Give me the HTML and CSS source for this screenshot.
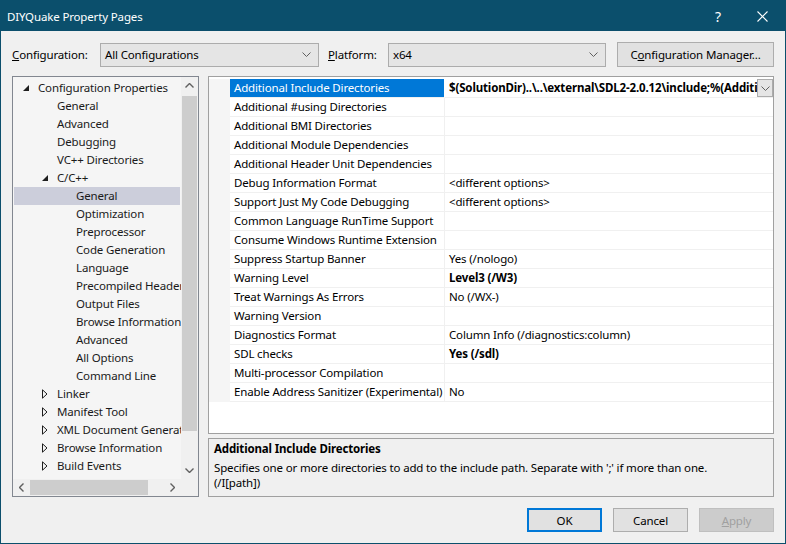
FILE: index.html
```html
<!DOCTYPE html>
<html>
<head>
<meta charset="utf-8">
<link rel="stylesheet" href="styles.css">
</head>
<body>
<div class="window">
  <div class="titlebar">
    <span class="title">DIYQuake Property Pages</span>
    <span class="tb-help">?</span>
    <svg class="tb-close" width="11" height="11" viewBox="0 0 11 11"><path d="M0.5 0.5 L10.5 10.5 M10.5 0.5 L0.5 10.5" stroke="#fff" stroke-width="1.1" fill="none"/></svg>
  </div>
  <div class="content">
    <div class="toprow">
      <span class="lbl lbl-config"><u>C</u>onfiguration:</span>
      <div class="combo combo-config"><span class="combo-text">All Configurations</span><svg class="chev" width="9" height="5" viewBox="0 0 9 5"><path d="M0.5 0.5 L4.5 4.5 L8.5 0.5" stroke="#606060" fill="none"/></svg></div>
      <span class="lbl lbl-platform"><u>P</u>latform:</span>
      <div class="combo combo-platform"><span class="combo-text">x64</span><svg class="chev" width="9" height="5" viewBox="0 0 9 5"><path d="M0.5 0.5 L4.5 4.5 L8.5 0.5" stroke="#606060" fill="none"/></svg></div>
      <button class="btn btn-cfgmgr">C<u>o</u>nfiguration Manager...</button>
    </div>
    <div class="main">
      <div class="tree">
        <div class="tree-view">
          <div class="trow l0"><span class="exp"><svg width="6" height="6" viewBox="0 0 6 6"><path d="M6 0 L6 6 L0 6 Z" fill="#1e1e1e"/></svg></span>Configuration Properties</div>
          <div class="trow l1"><span class="exp"></span>General</div>
          <div class="trow l1"><span class="exp"></span>Advanced</div>
          <div class="trow l1"><span class="exp"></span>Debugging</div>
          <div class="trow l1"><span class="exp"></span>VC++ Directories</div>
          <div class="trow l1"><span class="exp"><svg width="6" height="6" viewBox="0 0 6 6"><path d="M6 0 L6 6 L0 6 Z" fill="#1e1e1e"/></svg></span>C/C++</div>
          <div class="trow l2 sel"><span class="exp"></span>General</div>
          <div class="trow l2"><span class="exp"></span>Optimization</div>
          <div class="trow l2"><span class="exp"></span>Preprocessor</div>
          <div class="trow l2"><span class="exp"></span>Code Generation</div>
          <div class="trow l2"><span class="exp"></span>Language</div>
          <div class="trow l2"><span class="exp"></span>Precompiled Headers</div>
          <div class="trow l2"><span class="exp"></span>Output Files</div>
          <div class="trow l2"><span class="exp"></span>Browse Information</div>
          <div class="trow l2"><span class="exp"></span>Advanced</div>
          <div class="trow l2"><span class="exp"></span>All Options</div>
          <div class="trow l2"><span class="exp"></span>Command Line</div>
          <div class="trow l1"><span class="exp"><svg width="6" height="10" viewBox="0 0 6 10"><path d="M0.5 0.8 L5 5 L0.5 9.2 Z" stroke="#1e1e1e" fill="none"/></svg></span>Linker</div>
          <div class="trow l1"><span class="exp"><svg width="6" height="10" viewBox="0 0 6 10"><path d="M0.5 0.8 L5 5 L0.5 9.2 Z" stroke="#1e1e1e" fill="none"/></svg></span>Manifest Tool</div>
          <div class="trow l1"><span class="exp"><svg width="6" height="10" viewBox="0 0 6 10"><path d="M0.5 0.8 L5 5 L0.5 9.2 Z" stroke="#1e1e1e" fill="none"/></svg></span>XML Document Generator</div>
          <div class="trow l1"><span class="exp"><svg width="6" height="10" viewBox="0 0 6 10"><path d="M0.5 0.8 L5 5 L0.5 9.2 Z" stroke="#1e1e1e" fill="none"/></svg></span>Browse Information</div>
          <div class="trow l1"><span class="exp"><svg width="6" height="10" viewBox="0 0 6 10"><path d="M0.5 0.8 L5 5 L0.5 9.2 Z" stroke="#1e1e1e" fill="none"/></svg></span>Build Events</div>
        </div>
        <div class="vscroll">
          <div class="sarrow"><svg width="9" height="5" viewBox="0 0 9 5"><path d="M0.5 4.5 L4.5 0.5 L8.5 4.5" stroke="#606060" stroke-width="1.4" fill="none"/></svg></div>
          <div class="vtrack"><div class="vthumb"></div></div>
          <div class="sarrow"><svg width="9" height="5" viewBox="0 0 9 5"><path d="M0.5 0.5 L4.5 4.5 L8.5 0.5" stroke="#606060" stroke-width="1.4" fill="none"/></svg></div>
        </div>
        <div class="hscroll">
          <div class="harrow"><svg width="5" height="9" viewBox="0 0 5 9"><path d="M4.5 0.5 L0.5 4.5 L4.5 8.5" stroke="#606060" stroke-width="1.4" fill="none"/></svg></div>
          <div class="htrack"><div class="hthumb"></div></div>
          <div class="harrow"><svg width="5" height="9" viewBox="0 0 5 9"><path d="M0.5 0.5 L4.5 4.5 L0.5 8.5" stroke="#606060" stroke-width="1.4" fill="none"/></svg></div>
        </div>
        <div class="corner"></div>
      </div>
      <div class="right">
        <div class="grid">
          <div class="grow sel"><span class="gut"></span><span class="gname">Additional Include Directories</span><span class="gval"><span class="vtext b">$(SolutionDir)..\..\external\SDL2-2.0.12\include;%(AdditionalIncludeDirectories)</span><span class="ddbtn"><svg width="9" height="5" viewBox="0 0 9 5"><path d="M0.5 0.5 L4.5 4.5 L8.5 0.5" stroke="#606060" fill="none"/></svg></span></span></div>
          <div class="grow"><span class="gut"></span><span class="gname">Additional #using Directories</span><span class="gval"></span></div>
          <div class="grow"><span class="gut"></span><span class="gname">Additional BMI Directories</span><span class="gval"></span></div>
          <div class="grow"><span class="gut"></span><span class="gname">Additional Module Dependencies</span><span class="gval"></span></div>
          <div class="grow"><span class="gut"></span><span class="gname">Additional Header Unit Dependencies</span><span class="gval"></span></div>
          <div class="grow"><span class="gut"></span><span class="gname">Debug Information Format</span><span class="gval">&lt;different options&gt;</span></div>
          <div class="grow"><span class="gut"></span><span class="gname">Support Just My Code Debugging</span><span class="gval">&lt;different options&gt;</span></div>
          <div class="grow"><span class="gut"></span><span class="gname">Common Language RunTime Support</span><span class="gval"></span></div>
          <div class="grow"><span class="gut"></span><span class="gname">Consume Windows Runtime Extension</span><span class="gval"></span></div>
          <div class="grow"><span class="gut"></span><span class="gname">Suppress Startup Banner</span><span class="gval">Yes (/nologo)</span></div>
          <div class="grow"><span class="gut"></span><span class="gname">Warning Level</span><span class="gval b">Level3 (/W3)</span></div>
          <div class="grow"><span class="gut"></span><span class="gname">Treat Warnings As Errors</span><span class="gval">No (/WX-)</span></div>
          <div class="grow"><span class="gut"></span><span class="gname">Warning Version</span><span class="gval"></span></div>
          <div class="grow"><span class="gut"></span><span class="gname">Diagnostics Format</span><span class="gval">Column Info (/diagnostics:column)</span></div>
          <div class="grow"><span class="gut"></span><span class="gname">SDL checks</span><span class="gval b">Yes (/sdl)</span></div>
          <div class="grow"><span class="gut"></span><span class="gname">Multi-processor Compilation</span><span class="gval"></span></div>
          <div class="grow"><span class="gut"></span><span class="gname">Enable Address Sanitizer (Experimental)</span><span class="gval">No</span></div>
        </div>
        <div class="desc">
          <div class="desc-title">Additional Include Directories</div>
          <div class="desc-text">Specifies one or more directories to add to the include path. Separate with ';' if more than one.<br>(/I[path])</div>
        </div>
      </div>
    </div>
    <div class="buttons">
      <button class="btn dbtn default">OK</button>
      <button class="btn dbtn">Cancel</button>
      <button class="btn dbtn disabled"><u>A</u>pply</button>
    </div>
  </div>
</div>
</body>
</html>
```
FILE: styles.css
```css
* { box-sizing: border-box; }
body {
  margin: 0;
  font-family: "Noto Sans", "Open Sans", sans-serif;
  font-size: 11.5px;
  letter-spacing: -0.15px;
  color: #000;
}
.window {
  width: 786px;
  height: 544px;
  border: 1px solid #0b4f6c;
  background: #f0f0f0;
  display: flex;
  flex-direction: column;
}
.titlebar {
  flex: none;
  height: 30px;
  background: #0b4f6c;
  color: #fff;
  display: flex;
  align-items: center;
  padding: 0 17px 0 6px;
  font-size: 11.5px;
}
.title { flex: 1; }
.tb-help { font-size: 14px; margin-right: 36px; }
.tb-close { display: block; }

.content {
  flex: 1;
  display: flex;
  flex-direction: column;
  padding: 11px;
}
.toprow {
  height: 25px;
  display: flex;
  align-items: center;
}
.lbl-config { width: 88px; }
.lbl-platform { width: 60px; margin-left: 9px; }
.combo {
  height: 24px;
  border: 1px solid #acacac;
  background: #e5e5e5;
  display: flex;
  align-items: center;
  padding: 0 7px 0 4px;
}
.combo-config { width: 219px; }
.combo-platform { width: 218px; }
.combo-text { flex: 1; }
.chev { display: block; }
.btn {
  font-family: inherit;
  font-size: 11.5px;
  letter-spacing: -0.15px;
  color: #000;
  background: #e1e1e1;
  border: 1px solid #adadad;
  padding: 0;
}
.btn-cfgmgr { width: 157px; height: 25px; margin-left: 11px; }

.main {
  margin-top: 9px;
  height: 421px;
  display: flex;
  gap: 9px;
}
.tree {
  width: 187px;
  border: 1px solid #828790;
  background: #f5f5f5;
  display: grid;
  grid-template-columns: 168px 17px;
  grid-template-rows: 402px 17px;
}
.tree-view {
  overflow: hidden;
  padding-top: 2px;
}
.trow {
  height: 18px;
  line-height: 18px;
  white-space: nowrap;
  display: flex;
  align-items: center;
  color: #1a1a1a;
}
.trow.l0 { padding-left: 9px; }
.trow.l1 { padding-left: 28px; }
.trow.l2 { padding-left: 47px; }
.trow.sel { background: #cccedb; margin: 0 1px; padding-left: 46px; }
.exp {
  flex: none;
  width: 16px;
  height: 18px;
  display: flex;
  align-items: center;
  padding-left: 1px;
}
.exp svg { display: block; }

.vscroll {
  background: #f0f0f0;
  display: flex;
  flex-direction: column;
}
.sarrow {
  height: 17px;
  display: flex;
  align-items: center;
  justify-content: center;
}
.vtrack { flex: 1; padding: 2px 1px; }
.vthumb { height: 335px; background: #cdcdcd; }
.hscroll {
  background: #f0f0f0;
  display: flex;
}
.harrow {
  width: 17px;
  display: flex;
  align-items: center;
  justify-content: center;
}
.htrack { flex: 1; padding: 1px 0; }
.hthumb { width: 118px; height: 15px; background: #cdcdcd; }
.corner { background: #f0f0f0; }

.right {
  width: 566px;
  display: flex;
  flex-direction: column;
  gap: 4px;
}
.grid {
  height: 358px;
  border: 1px solid #a0a0a0;
  background: #fff;
  padding-top: 2px;
}
.grow {
  display: flex;
  height: 19px;
  line-height: 18px;
  white-space: nowrap;
}
.gut { width: 21px; flex: none; background: #f5f5f5; }
.gname {
  width: 215px;
  flex: none;
  padding-left: 4px;
  border-bottom: 1px solid #f0f0f0;
  border-right: 1px solid #f0f0f0;
  overflow: hidden;
}
.gval {
  flex: 1;
  min-width: 0;
  padding-left: 4px;
  border-bottom: 1px solid #f0f0f0;
  overflow: hidden;
  display: flex;
}
.grow.sel .gname { background: #0078d7; color: #fff; border-right-color: #fff; }
.vtext { flex: 1; min-width: 0; overflow: hidden; }
.b { font-weight: bold; }
.ddbtn {
  flex: none;
  width: 16px;
  height: 18px;
  border: 1px solid #acacac;
  background: #e5e5e5;
  display: flex;
  align-items: center;
  justify-content: center;
}

.desc {
  height: 59px;
  border: 1px solid #a0a0a0;
  padding: 2px 5px 0;
}
.desc-title { font-weight: bold; line-height: 16px; }
.desc-text { margin-top: 3px; line-height: 15px; }

.buttons {
  margin-top: 11px;
  height: 24px;
  display: flex;
  justify-content: flex-end;
  gap: 11px;
}
.dbtn { width: 75px; height: 24px; }
.dbtn.default { border: 2px solid #0078d7; }
.dbtn.disabled { background: #cccccc; border-color: #bfbfbf; color: #a0a0a0; }
```
